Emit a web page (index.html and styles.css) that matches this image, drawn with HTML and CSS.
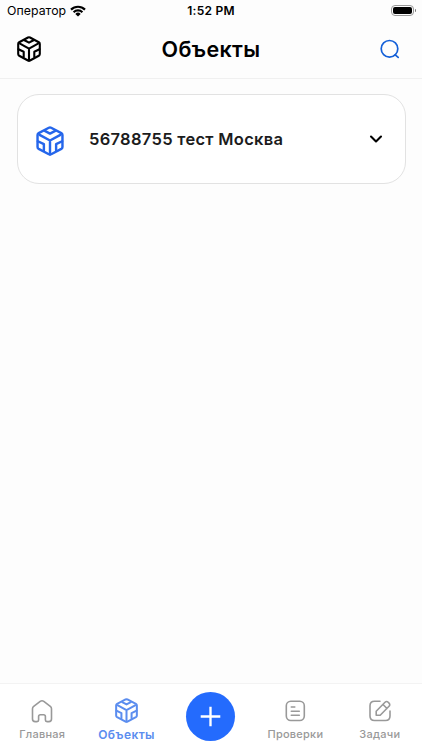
FILE: index.html
```html
<!DOCTYPE html>
<html lang="ru">
<head>
    <meta charset="UTF-8">
    <meta name="viewport" content="width=device-width, initial-scale=1.0">
    <title>Объекты</title>
    <link rel="stylesheet" href="styles.css">
</head>
<body>
    <!-- Контур куба, общий для шапки, карточки и меню -->
    <svg class="sprite" width="0" height="0">
        <symbol id="cube" viewBox="0 0 24 26">
            <path d="M11 1.500q1-.5 2 0l8.800 4.700q1 .6 1 1.700v10.200q0 1.100-1 1.700L13 24.500q-1 .5-2 0l-8.800-4.700q-1-.6-1-1.700V7.900q0-1.100 1-1.700z"/>
            <path d="M3 7.700l9 4.900 9-4.900M12 12.600v12M7.500 4.200l4.500 2.400 4.500-2.400M1.500 13.200l5.200 2.500v5.300M22.500 13.200l-5.200 2.500v5.300"/>
        </symbol>
    </svg>

    <div class="screen">
        <div class="status-bar">
            <div class="carrier">
                <span>Оператор</span>
                <svg class="wifi" viewBox="0 0 16 12">
                    <path d="M1 4.600a10 10 0 0 1 14 0M3.600 7.200a6.300 6.300 0 0 1 8.800 0"/>
                    <path class="wifi-dot" d="M5.300 8.900a3.900 3.900 0 0 1 5.400 0L8 11.600z"/>
                </svg>
            </div>
            <div class="time">1:52 PM</div>
            <div class="battery"></div>
        </div>

        <header class="header">
            <svg class="header-cube icon"><use href="#cube"/></svg>
            <h1 class="title">Объекты</h1>
            <svg class="search icon" viewBox="0 0 20 20">
                <circle cx="9.500" cy="9.800" r="8.300"/>
                <path d="m15.200 15.800 3 2.600"/>
            </svg>
        </header>

        <main class="content">
            <div class="card">
                <svg class="card-cube icon"><use href="#cube"/></svg>
                <span class="card-name">56788755 тест Москва</span>
                <svg class="chevron icon" viewBox="0 0 14 10"><path d="m2 2.500 5 5 5-5"/></svg>
            </div>
        </main>

        <nav class="tabs">
            <a class="tab">
                <svg class="tab-icon icon" viewBox="0 0 24 24">
                    <path d="M2.500 9.800c0-1 .4-1.800 1.200-2.400l6.500-5c1.100-.8 2.500-.8 3.600 0l6.500 5c.8.600 1.200 1.400 1.200 2.400V20c0 1.700-1 2.600-2.600 2.600h-1.900c-1 0-1.600-.6-1.600-1.600v-3.400c0-1.200-.7-1.800-1.800-1.800h-3.200c-1.100 0-1.800.6-1.800 1.800V21c0 1-.6 1.600-1.600 1.600H5.100c-1.600 0-2.600-.9-2.600-2.600z"/>
                </svg>
                <span>Главная</span>
            </a>
            <a class="tab tab-active">
                <svg class="tab-cube icon"><use href="#cube"/></svg>
                <span>Объекты</span>
            </a>
            <a class="tab tab-add">
                <svg class="add" viewBox="0 0 50 50"><path d="M25 15v20M15 25h20"/></svg>
            </a>
            <a class="tab">
                <svg class="tab-icon icon" viewBox="0 0 24 24">
                    <rect x="3.300" y="2.300" width="18" height="19.200" rx="4.500"/>
                    <path d="M8.300 8h3.500M8.300 12.200h8M8.300 16.300h8"/>
                </svg>
                <span>Проверки</span>
            </a>
            <a class="tab">
                <svg class="tab-icon icon" viewBox="0 0 24 24">
                    <path d="M12 2.300H6.500C3.500 2.300 2 3.800 2 6.800v10.200c0 3 1.500 4.500 4.500 4.500h11c3 0 4.500-1.500 4.500-4.500V12"/>
                    <path d="m8.200 12.300 8.800-9c1-1 2.200-1 3.200 0l.8.800c1 1 1 2.200 0 3.200l-8.800 9H8.200zM15 5.500l4 4"/>
                </svg>
                <span>Задачи</span>
            </a>
        </nav>
    </div>
</body>
</html>
```
FILE: styles.css
```css
* {
    box-sizing: border-box;
}

body {
    margin: 0;
    background: #fdfdfd;
    color: #000;
    font-family: Inter, "Liberation Sans", sans-serif;
}

.sprite {
    position: absolute;
}

.screen {
    display: flex;
    flex-direction: column;
    height: 100vh;
}

.icon {
    fill: none;
    stroke: currentColor;
    stroke-width: 2.1;
    stroke-linecap: round;
    stroke-linejoin: round;
}

/* Строка состояния */
.status-bar {
    display: grid;
    grid-template-columns: 1fr auto 1fr;
    align-items: center;
    height: 22px;
    padding: 0 7px 1px;
    font-size: 12.3px;
}

.carrier {
    display: flex;
    align-items: center;
    gap: 4px;
    letter-spacing: 0.05px;
}

.wifi {
    width: 16px;
    height: 12px;
    fill: none;
    stroke: #000;
    stroke-width: 2.2;
}

.wifi-dot {
    fill: #000;
    stroke: none;
}

.time {
    font-size: 12px;
    font-weight: 600;
    letter-spacing: 0.25px;
}

.battery {
    justify-self: end;
    position: relative;
    width: 23px;
    height: 11px;
    margin-right: 1px;
    border: 1px solid #999;
    border-radius: 4px;
    background: #000 content-box;
    padding: 1px;
}

.battery::after {
    content: '';
    position: absolute;
    top: 3px;
    right: -3px;
    width: 1px;
    height: 3px;
    border-radius: 0 2px 2px 0;
    background: #777;
}

/* Шапка */
.header {
    display: grid;
    grid-template-columns: 1fr auto 1fr;
    align-items: center;
    height: 57px;
    padding: 0 17px 3px;
    border-bottom: 1px solid #f0f0f0;
}

.header-cube {
    width: 24px;
    height: 26px;
}

.title {
    margin: 0;
    font-size: 21.5px;
    font-weight: 600;
    letter-spacing: 0.35px;
}

.search {
    justify-self: end;
    width: 20px;
    height: 20px;
    margin-right: 5.5px;
    color: #1460d8;
    stroke-width: 1.7;
}

/* Карточка объекта */
.content {
    flex: 1;
    padding: 15px 16.5px;
}

.card {
    display: flex;
    align-items: center;
    height: 89.5px;
    padding: 0 21.5px 0 18.5px;
    border: 1px solid #e2e2e2;
    border-radius: 22px;
    background: #fff;
}

.card-cube {
    width: 28px;
    height: 30px;
    margin-top: 5px;
    color: #2566eb;
}

.card-name {
    flex: 1;
    margin-left: 25px;
    color: #1c1c1c;
    font-size: 16.5px;
    font-weight: 600;
    letter-spacing: 0.3px;
}

.chevron {
    width: 14px;
    height: 10px;
}

/* Нижнее меню */
.tabs {
    display: grid;
    grid-template-columns: repeat(5, 1fr);
    height: 67px;
    border-top: 1px solid #f3f3f3;
    background: #fff;
}

.tab {
    display: flex;
    flex-direction: column;
    align-items: center;
    padding-top: 15px;
    color: #999;
    font-size: 11px;
    font-weight: 500;
    line-height: 14px;
    letter-spacing: 0.25px;
}

.tab-icon {
    width: 24px;
    height: 24px;
    margin-bottom: 4px;
    stroke-width: 1.6;
}

.tab-active {
    padding-top: 14px;
    color: #5b8def;
    font-size: 12px;
    font-weight: 600;
    letter-spacing: 0.4px;
}

.tab-cube {
    width: 23px;
    height: 25px;
    margin-bottom: 5px;
}

.tab-add {
    padding-top: 8px;
}

.add {
    width: 49px;
    height: 49px;
    border-radius: 50%;
    background: #246bfd;
    stroke: #fff;
    stroke-width: 2.4;
}
```
